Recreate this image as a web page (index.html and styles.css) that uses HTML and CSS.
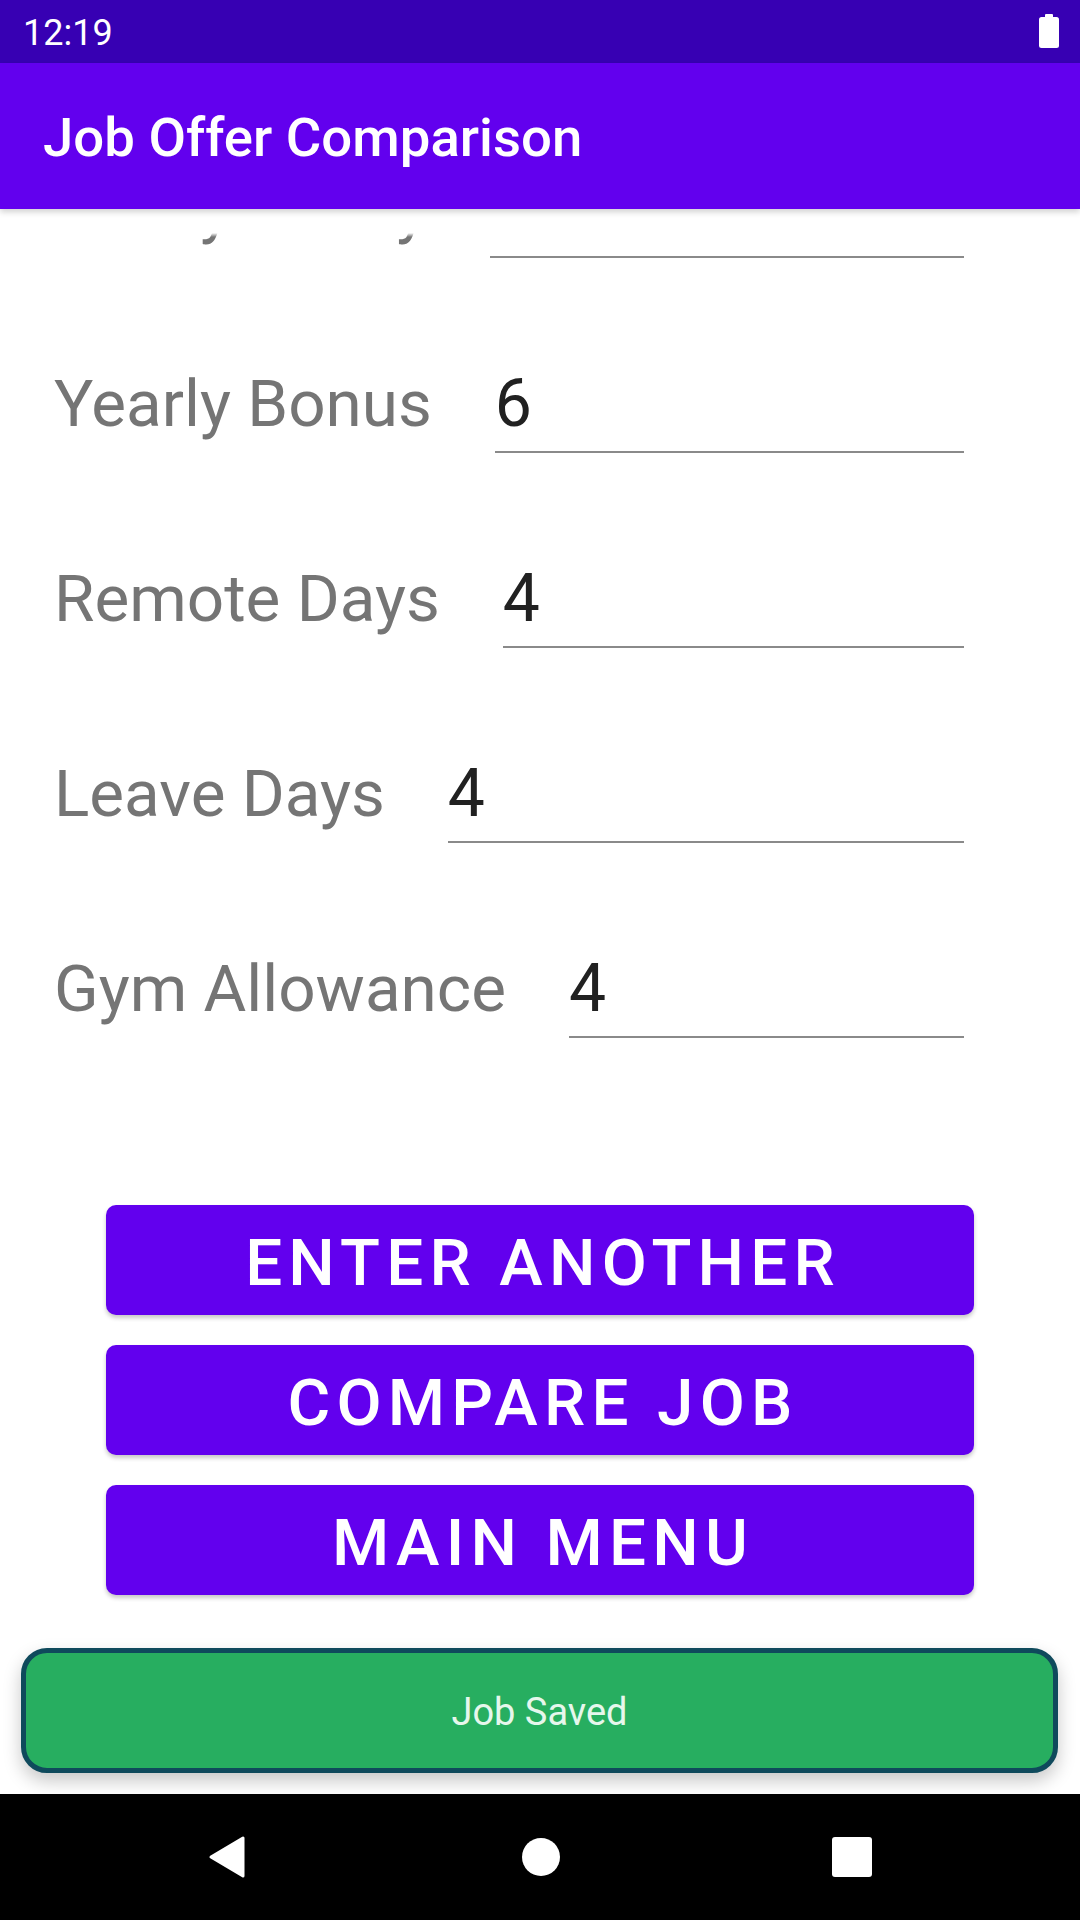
FILE: index.html
```html
<!DOCTYPE html>
<html>
<head>
<meta charset="utf-8">
<link rel="stylesheet" href="styles.css">
</head>
<body>
<div class="screen">
  <div class="statusbar">
    <span class="clock">12:19</span>
    <svg class="battery" width="20" height="34" viewBox="0 0 20 34">
      <rect x="6" y="0" width="8" height="5" rx="1" fill="#fff"/>
      <rect x="0" y="3" width="20" height="31" rx="2.5" fill="#fff"/>
    </svg>
  </div>
  <div class="toolbar">
    <span class="title">Job Offer Comparison</span>
  </div>
  <div class="content">
    <div class="form">
      <div class="row">
        <span class="label">Yearly Salary</span>
        <span class="field"></span>
      </div>
      <div class="row">
        <span class="label">Yearly Bonus</span>
        <span class="field">6</span>
      </div>
      <div class="row">
        <span class="label">Remote Days</span>
        <span class="field">4</span>
      </div>
      <div class="row">
        <span class="label">Leave Days</span>
        <span class="field">4</span>
      </div>
      <div class="row">
        <span class="label">Gym Allowance</span>
        <span class="field">4</span>
      </div>
    </div>
    <div class="buttons">
      <div class="btn">ENTER ANOTHER</div>
      <div class="btn">COMPARE JOB</div>
      <div class="btn">MAIN MENU</div>
    </div>
    <div class="toast">Job Saved</div>
  </div>
  <div class="navbar">
    <svg class="nav-back" width="38" height="44" viewBox="0 0 38 44">
      <path d="M3 22 L35 3 L35 41 Z" fill="#fff" stroke="#fff" stroke-width="3" stroke-linejoin="round"/>
    </svg>
    <svg class="nav-home" width="38" height="38" viewBox="0 0 38 38">
      <circle cx="19" cy="19" r="19" fill="#fff"/>
    </svg>
    <svg class="nav-recent" width="40" height="40" viewBox="0 0 40 40">
      <rect x="0" y="0" width="40" height="40" rx="3" fill="#fff"/>
    </svg>
  </div>
</div>
</body>
</html>
```
FILE: styles.css
```css
html, body {
  margin: 0;
  padding: 0;
  background: #ffffff;
}
.screen {
  width: 1080px;
  height: 1920px;
  display: flex;
  flex-direction: column;
  font-family: Roboto, "Noto Sans", sans-serif;
  overflow: hidden;
}
.statusbar {
  height: 63px;
  flex: none;
  background: #3700B3;
  display: flex;
  align-items: center;
  justify-content: space-between;
  padding: 0 21px 0 23px;
  box-sizing: border-box;
}
.clock {
  color: #ffffff;
  font-size: 36px;
  line-height: 1;
  margin-top: 3px;
}
.battery {
  display: block;
  margin-top: -2px;
}
.toolbar {
  height: 146px;
  flex: none;
  background: #6200EE;
  display: flex;
  align-items: center;
  padding-left: 43px;
  box-sizing: border-box;
  position: relative;
  z-index: 2;
  box-shadow: 0 3px 6px rgba(0, 0, 0, 0.18);
}
.title {
  color: #ffffff;
  font-size: 54.5px;
  font-weight: 500;
  line-height: 1;
  margin-top: 2px;
}
.content {
  flex: 1;
  position: relative;
  overflow: hidden;
  background: #ffffff;
}
/* scroll view top fading edge */
.content::before {
  content: "";
  position: absolute;
  top: 0;
  left: 0;
  right: 0;
  height: 28px;
  background: linear-gradient(#ffffff 0, #ffffff 24px, rgba(255, 255, 255, 0) 28px);
  z-index: 1;
}
.form {
  margin-top: -40px;
  padding: 0 116px 0 54px;
  display: flex;
  flex-direction: column;
  gap: 106px;
}
.row {
  display: flex;
  align-items: flex-end;
  gap: 63px;
}
.label {
  flex: none;
  font-size: 65.6px;
  line-height: 80px;
  color: #757575;
  padding-bottom: 9px;
}
.field {
  flex: 1;
  font-size: 66px;
  line-height: 80px;
  color: #212121;
  padding-bottom: 7px;
  border-bottom: 2px solid #8a8a8a;
  height: 80px;
}
.buttons {
  margin-top: 167px;
  display: flex;
  flex-direction: column;
  align-items: center;
  gap: 30px;
}
.btn {
  width: 868px;
  height: 110px;
  box-sizing: border-box;
  padding: 5px 0 0 6px;
  background: #6200EE;
  border-radius: 10px;
  color: #ffffff;
  font-size: 65.5px;
  font-weight: 500;
  letter-spacing: 6.2px;
  display: flex;
  align-items: center;
  justify-content: center;
  box-shadow: 0 3px 4px rgba(0, 0, 0, 0.22);
}
.toast {
  position: absolute;
  left: 21px;
  right: 22px;
  bottom: 21px;
  height: 125px;
  box-sizing: border-box;
  padding-top: 3px;
  background: #27AE60;
  border: 5px solid #0F4A5C;
  border-radius: 26px;
  color: #E6F7EC;
  font-size: 38px;
  display: flex;
  align-items: center;
  justify-content: center;
  box-shadow: 0 8px 18px rgba(0, 0, 0, 0.22);
  z-index: 2;
}
.navbar {
  height: 126px;
  flex: none;
  background: #000000;
  display: flex;
  align-items: center;
  justify-content: center;
}
.nav-back {
  display: block;
  margin-right: 276px;
}
.nav-home {
  display: block;
  margin-right: 272px;
}
.nav-recent {
  display: block;
}
```
